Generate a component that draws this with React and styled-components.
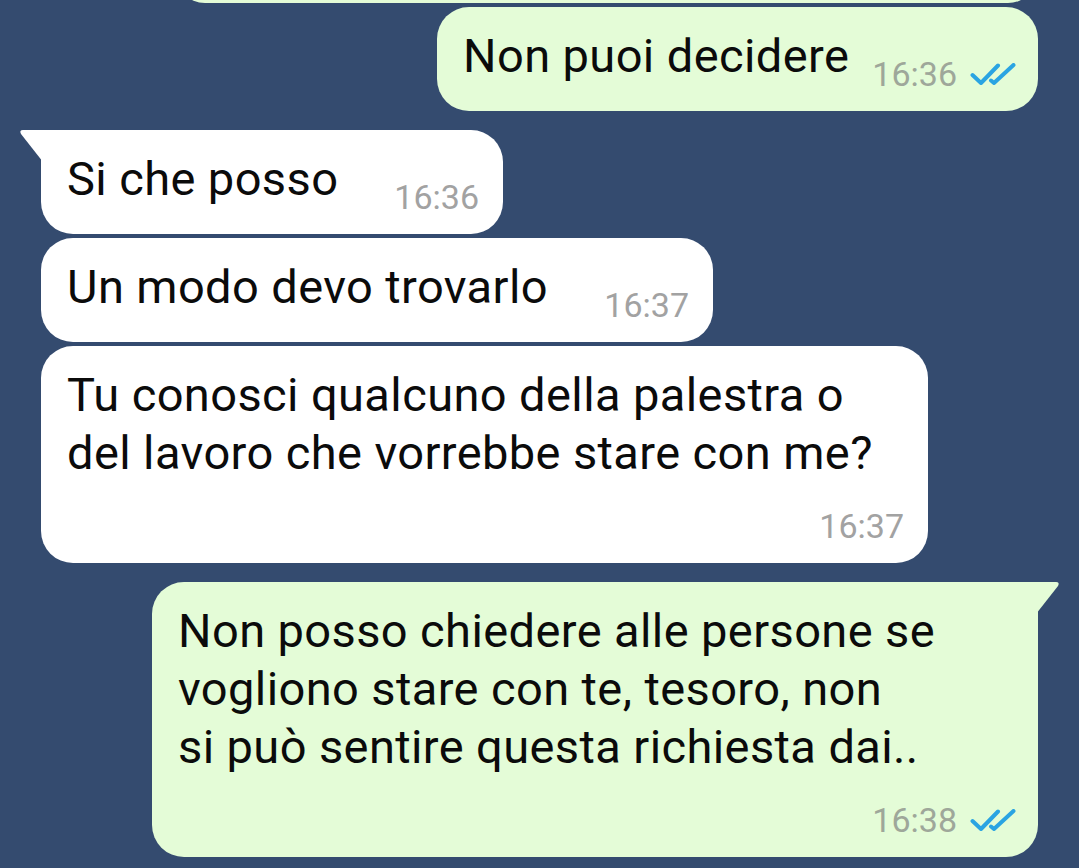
import { styled, createGlobalStyle } from 'styled-components';

const GlobalStyle = createGlobalStyle`
    html, body {
        margin: 0;
        padding: 0;
        background: #344b6f;
        height: 100%;
        overflow: hidden;
    }
    body {
        font-family: Roboto, "Noto Sans", "Liberation Sans", sans-serif;
    }
`;

const Chat = styled.div`
    display: flex;
    flex-direction: column;
    padding: 0 41px;
    height: 868px;
    overflow: hidden;
`;

const Bubble = styled.div`
    position: relative;
    box-sizing: border-box;
    width: ${(props) => props.width}px;
    align-self: ${(props) => (props.out ? 'flex-end' : 'flex-start')};
    margin-top: ${(props) => props.gap}px;
    padding: 20px 24px 17px 26px;
    background: ${(props) => (props.out ? '#e4fcd7' : '#ffffff')};
    border-radius: 32px;
    ${(props) =>
        props.tail &&
        (props.out
            ? 'border-top-right-radius: 0;'
            : 'border-top-left-radius: 0;')}
    &::before {
        content: '';
        display: ${(props) => (props.tail ? 'block' : 'none')};
        position: absolute;
        top: 0;
        width: 24px;
        height: 32px;
        background: inherit;
        ${(props) =>
            props.out
                ? "right: -22px; clip-path: path('M0 0 H20 Q24 0 22 4 L0 32 Z');"
                : "left: -22px; clip-path: path('M4 0 H24 V32 L2 4 Q0 0 4 0 Z');"}
    }
`;

const Row = styled.div`
    display: flex;
    align-items: flex-end;
    justify-content: space-between;
`;

const Text = styled.div`
    font-size: 47px;
    letter-spacing: 0.4px;
    line-height: 58px;
    color: #0b0b0b;
    white-space: nowrap;
    margin-bottom: ${(props) => (props.inline ? '9px' : '0')};
`;

const Meta = styled.div`
    display: flex;
    align-items: flex-end;
    justify-content: flex-end;
    gap: 13px;
    margin-top: ${(props) => (props.stacked ? '24px' : '0')};
    flex-shrink: 0;
`;

const Time = styled.span`
    font-size: 34px;
    line-height: 40px;
    color: ${(props) => (props.out ? '#9ea79a' : '#a2a2a2')};
`;

const Ticks = styled.svg`
    width: 46px;
    height: 22px;
    margin-bottom: 9px;
    margin-right: -2px;
`;

function DoubleTick() {
    return (
        <Ticks viewBox="0 0 46 22" fill="none">
            <path
                d="M2.5 12 L11 20 L28 2.5"
                stroke="#2aa4e2"
                strokeWidth="4"
                strokeLinecap="round"
                strokeLinejoin="round"
            />
            <path
                d="M21 17.5 L24 20 L43.5 2"
                stroke="#2aa4e2"
                strokeWidth="4"
                strokeLinecap="round"
                strokeLinejoin="round"
            />
        </Ticks>
    );
}

const messages = [
    { out: true, width: 601, gap: 4, tail: false, lines: ['Non puoi decidere'], time: '16:36' },
    { out: false, width: 462, gap: 19, tail: true, lines: ['Si che posso'], time: '16:36' },
    { out: false, width: 672, gap: 4, tail: false, lines: ['Un modo devo trovarlo'], time: '16:37' },
    {
        out: false,
        width: 887,
        gap: 4,
        tail: false,
        lines: ['Tu conosci qualcuno della palestra o', 'del lavoro che vorrebbe stare con me?'],
        time: '16:37',
    },
    {
        out: true,
        width: 886,
        gap: 19,
        tail: true,
        lines: [
            'Non posso chiedere alle persone se',
            'vogliono stare con te, tesoro, non',
            'si può sentire questa richiesta dai..',
        ],
        time: '16:38',
    },
];

function Message({ msg }) {
    const meta = (stacked) => (
        <Meta stacked={stacked}>
            <Time out={msg.out}>{msg.time}</Time>
            {msg.out && <DoubleTick />}
        </Meta>
    );

    return (
        <Bubble out={msg.out} width={msg.width} gap={msg.gap} tail={msg.tail}>
            {msg.lines.length === 1 ? (
                <Row>
                    <Text inline>{msg.lines[0]}</Text>
                    {meta(false)}
                </Row>
            ) : (
                <>
                    <Text>
                        {msg.lines.map((line) => (
                            <div key={line}>{line}</div>
                        ))}
                    </Text>
                    {meta(true)}
                </>
            )}
        </Bubble>
    );
}

export default function App() {
    return (
        <>
            <GlobalStyle />
            <Chat>
                {/* previous message, scrolled almost out of view */}
                <Bubble out width={863} gap={-57} style={{ height: 60 }} />
                {messages.map((msg, i) => (
                    <Message key={i} msg={msg} />
                ))}
            </Chat>
        </>
    );
}
